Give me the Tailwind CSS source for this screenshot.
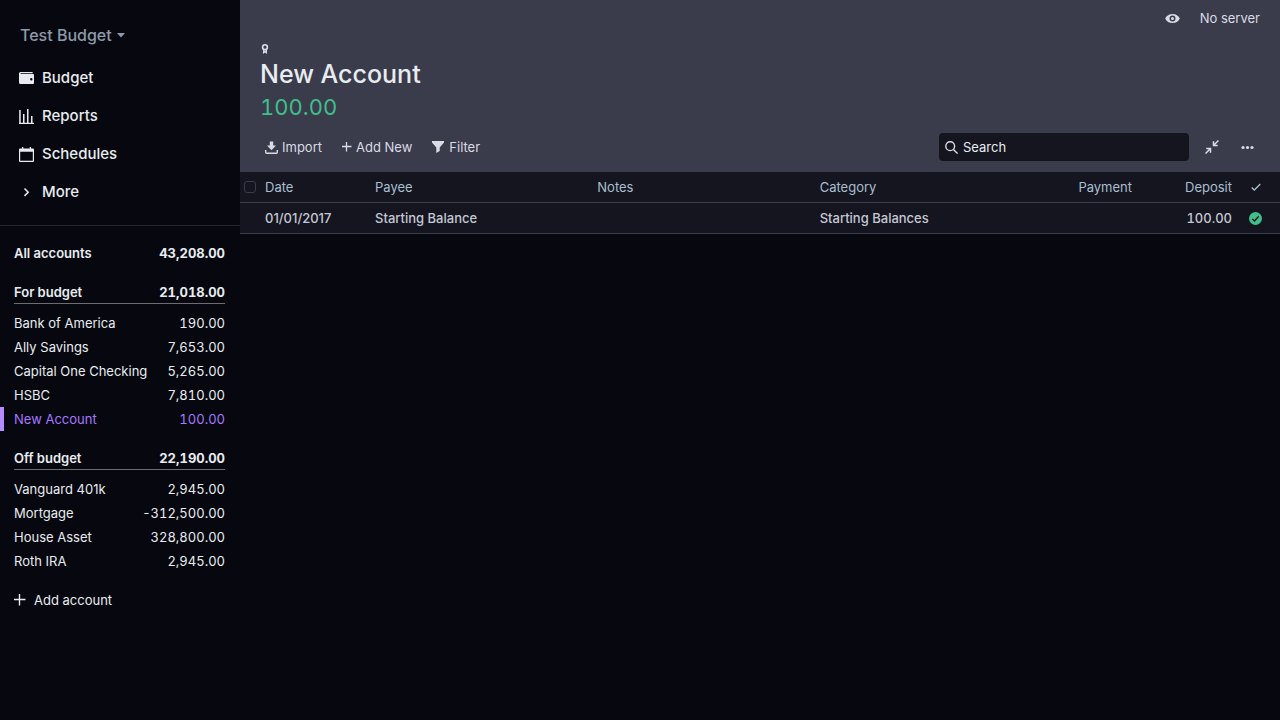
<!DOCTYPE html>
<html lang="en">
<head>
<meta charset="utf-8">
<meta name="viewport" content="width=device-width, initial-scale=1">
<title>New Account</title>
<script src="https://cdn.jsdelivr.net/npm/@tailwindcss/browser@4"></script>
</head>
<body class="flex min-h-screen bg-[#07080f] font-['Inter',sans-serif] text-[13px] leading-4 text-[#e8ecf0]">
<aside class="w-60 shrink-0">
  <button type="button" class="mt-[23px] ml-5 flex h-6 items-center gap-[5px] text-base font-medium text-[#8d9aa9]">Test Budget
    <svg class="size-2" viewBox="0 0 8 8" fill="currentColor"><path d="M0 2h8L4 6.500z"/></svg>
  </button>
  <nav class="mt-3 border-b border-[#242433] pb-[14px] text-[15px] font-medium">
    <a href="#" class="flex h-[38px] items-center gap-2 pl-[19px]">
      <svg class="size-[15px]" viewBox="0 0 15 15" fill="currentColor"><path fill-rule="evenodd" d="M1.500 1H13a.8.8 0 0 1 .8.8V2.300H1.600v.8H14a1 1 0 0 1 1 1V12a1 1 0 0 1-1 1H1.500A1.500 1.500 0 0 1 0 11.500v-9A1.500 1.500 0 0 1 1.500 1zM12.300 9.500a1.200 1.200 0 1 0 0-2.400 1.200 1.200 0 0 0 0 2.400z"/></svg>Budget</a>
    <a href="#" class="flex h-[38px] items-center gap-2 pl-[19px]">
      <svg class="size-[15px]" viewBox="0 0 15 15" fill="currentColor"><path d="M0 13.700h15V15H0zM.2 1h1.500v13H.2zM4 5h1.500v9H4zM8 0h1.500v14H8zM12 7h1.500v7H12z"/></svg>Reports</a>
    <a href="#" class="flex h-[38px] items-center gap-2 pl-[19px]">
      <svg class="size-[15px]" viewBox="0 0 15 15" fill="currentColor"><path fill-rule="evenodd" d="M3 0h1.300v1.500h6.400V0H12v1.500h2a1 1 0 0 1 1 1V14a1 1 0 0 1-1 1H1a1 1 0 0 1-1-1V2.500a1 1 0 0 1 1-1h2zM1.200 4.700v9.100h12.600V4.700z"/></svg>Schedules</a>
    <button type="button" class="flex h-[38px] w-full items-center gap-2 pl-[19px]">
      <svg class="size-[15px]" viewBox="0 0 15 15" fill="none" stroke="currentColor" stroke-width="1.500"><path d="M5.500 3.500l3.700 3.700-3.700 3.700"/></svg>More</button>
  </nav>
  <div class="mt-[15px]">
    <a href="#" class="flex h-6 items-center justify-between pr-[15px] pl-[14px] font-semibold"><span>All accounts</span><span class="font-bold tabular-nums">43,208.00</span></a>
    <a href="#" class="mt-[15px] mr-[15px] mb-[7px] ml-[14px] flex h-6 items-center justify-between border-b border-[#6d6d70] font-semibold"><span>For budget</span><span class="font-bold tabular-nums">21,018.00</span></a>
    <a href="#" class="flex h-6 items-center justify-between pr-[15px] pl-[14px]"><span>Bank of America</span><span class="tabular-nums">190.00</span></a>
    <a href="#" class="flex h-6 items-center justify-between pr-[15px] pl-[14px]"><span>Ally Savings</span><span class="tabular-nums">7,653.00</span></a>
    <a href="#" class="flex h-6 items-center justify-between pr-[15px] pl-[14px]"><span>Capital One Checking</span><span class="tabular-nums">5,265.00</span></a>
    <a href="#" class="flex h-6 items-center justify-between pr-[15px] pl-[14px]"><span>HSBC</span><span class="tabular-nums">7,810.00</span></a>
    <a href="#" aria-current="page" class="flex h-6 items-center justify-between border-l-4 border-[#b58cff] pr-[15px] pl-[10px] text-[#a577ff]"><span>New Account</span><span class="tabular-nums">100.00</span></a>
    <a href="#" class="mt-[15px] mr-[15px] mb-[7px] ml-[14px] flex h-6 items-center justify-between border-b border-[#6d6d70] font-semibold"><span>Off budget</span><span class="font-bold tabular-nums">22,190.00</span></a>
    <a href="#" class="flex h-6 items-center justify-between pr-[15px] pl-[14px]"><span>Vanguard 401k</span><span class="tabular-nums">2,945.00</span></a>
    <a href="#" class="flex h-6 items-center justify-between pr-[15px] pl-[14px]"><span>Mortgage</span><span class="tabular-nums">-312,500.00</span></a>
    <a href="#" class="flex h-6 items-center justify-between pr-[15px] pl-[14px]"><span>House Asset</span><span class="tabular-nums">328,800.00</span></a>
    <a href="#" class="flex h-6 items-center justify-between pr-[15px] pl-[14px]"><span>Roth IRA</span><span class="tabular-nums">2,945.00</span></a>
    <button type="button" class="mt-[15px] flex h-6 items-center gap-2 pl-[14px]">
      <svg class="size-3" viewBox="0 0 12 12" stroke="currentColor" stroke-width="1.400"><path d="M0 5.500h11.500M5.500 0v11.500"/></svg>Add account</button>
  </div>
</aside>
<main class="min-w-0 flex-1">
  <header class="bg-[#3a3c4b] pb-[11px] text-[#d9dbe5]">
    <div class="flex h-9 items-center justify-end gap-5 pr-5">
      <button type="button" aria-label="Privacy mode"><svg class="size-[15px]" viewBox="0 0 20 20" fill="currentColor"><path fill-rule="evenodd" d="M.2 10a11 11 0 0 1 19.600 0A11 11 0 0 1 .2 10zm9.800 4a4 4 0 1 0 0-8 4 4 0 0 0 0 8zm0-2a2 2 0 1 1 0-4 2 2 0 0 1 0 4z"/></svg></button>
      <button type="button">No server</button>
    </div>
    <div class="pt-2 pl-5">
      <button type="button" aria-label="Notes" class="block"><svg class="size-[10px]" viewBox="0 0 10 10" fill="currentColor"><path fill-rule="evenodd" d="M5 0a3.200 3.200 0 1 1 0 6.400A3.200 3.200 0 0 1 5 0zm0 1.600a1.600 1.600 0 1 0 0 3.200 1.600 1.600 0 0 0 0-3.200z"/><path d="M3 5.800l2 .9 2-.9V10L5 8.400 3 10z"/></svg></button>
      <h1 class="mt-1 text-[25px] leading-8 font-medium text-[#e8ecf0]">New Account</h1>
      <p class="flex h-[34px] items-center text-[22px] leading-7 font-normal text-[#40bf8d] tabular-nums">100.00</p>
    </div>
    <div class="mt-[9px] flex h-7 items-center pr-[26px] pl-[25px]">
      <button type="button" class="flex items-center gap-1"><svg class="size-[13px]" viewBox="0 0 13 13" fill="currentColor"><path d="M4.800 .5h3.400v4h2.800L6.500 9.200 2 4.500h2.800z"/><path d="M.7 9v2.300a1 1 0 0 0 1 1h9.600a1 1 0 0 0 1-1V9" fill="none" stroke="currentColor" stroke-width="1.400"/></svg>Import</button>
      <button type="button" class="ml-5 flex items-center gap-1"><svg class="size-[10px]" viewBox="0 0 10 10" stroke="currentColor" stroke-width="1.300"><path d="M0 4.500h9.500M4.500 0v9.500"/></svg>Add New</button>
      <button type="button" class="ml-5 flex items-center gap-[5px]"><svg class="size-3" viewBox="0 0 12 12" fill="currentColor"><path d="M0 0h12v1.500L7.700 6.500v3.500L4.300 12V6.500L0 1.500z"/></svg>Filter</button>
      <label class="ml-auto flex h-7 w-[250px] items-center gap-[5px] rounded bg-[#151520] pl-[6px]">
        <svg class="size-[13px]" viewBox="0 0 13 13" fill="none" stroke="currentColor" stroke-width="1.400"><circle cx="5.200" cy="5.200" r="4.400"/><path d="M8.400 8.400l4.200 4.200"/></svg>
        <input type="search" aria-label="Search" placeholder="Search" class="min-w-0 flex-1 bg-transparent outline-none placeholder:text-[#e8ecf0]">
      </label>
      <button type="button" aria-label="Collapse" class="ml-4"><svg class="size-[14px]" viewBox="0 0 14 14" fill="none" stroke="currentColor" stroke-width="1.500"><path d="M13.500 .5L8.700 5.300M8.500 1.300v4.200h4.200M.5 13.500l4.800-4.800M1.300 8.500h4.200v4.200"/></svg></button>
      <button type="button" aria-label="Account menu" class="ml-[22px]"><svg class="size-[13px]" viewBox="0 0 13 13" fill="currentColor"><circle cx="2" cy="6.500" r="1.600"/><circle cx="6.500" cy="6.500" r="1.600"/><circle cx="11" cy="6.500" r="1.600"/></svg></button>
    </div>
  </header>
  <table class="w-full table-fixed border-separate border-spacing-0 bg-[#151520] text-left">
    <colgroup><col class="w-5"><col class="w-[110px]"><col><col><col><col class="w-[100px]"><col class="w-[100px]"><col class="w-[43px]"></colgroup>
    <thead>
      <tr class="h-[31px] text-[#a9bfcf] *:border-b *:border-[#3a3c4b]">
        <th class="pl-1"><input type="checkbox" aria-label="Select all" class="block size-3 appearance-none rounded-[3px] border border-[#3a3c4b]"></th>
        <th class="px-[5px] font-normal">Date</th>
        <th class="px-[5px] font-normal">Payee</th>
        <th class="px-[5px] font-normal">Notes</th>
        <th class="px-[5px] font-normal">Category</th>
        <th class="px-[5px] text-right font-normal">Payment</th>
        <th class="px-[5px] text-right font-normal">Deposit</th>
        <th class="pr-[6px]" aria-label="Cleared"><svg class="mx-auto size-[10px]" viewBox="0 0 10 10" fill="none" stroke="currentColor" stroke-width="1.300"><path d="M.7 5.500L3.300 8 9.300 2"/></svg></th>
      </tr>
    </thead>
    <tbody>
      <tr class="h-[31px] font-medium text-[#c4c8d4] *:border-b *:border-[#3a3c4b]">
        <td></td>
        <td class="px-[5px]">01/01/2017</td>
        <td class="px-[5px]">Starting Balance</td>
        <td></td>
        <td class="px-[5px]">Starting Balances</td>
        <td></td>
        <td class="px-[5px] text-right tabular-nums">100.00</td>
        <td class="pr-[6px]"><svg class="mx-auto size-[13px]" viewBox="0 0 13 13" role="img" aria-label="Cleared"><circle cx="6.500" cy="6.500" r="6.500" fill="#40bf8d"/><path d="M3.300 7l2.200 2 4.200-4.700" fill="none" stroke="#151520" stroke-width="1.400"/></svg></td>
      </tr>
    </tbody>
  </table>
</main>
</body>
</html>
